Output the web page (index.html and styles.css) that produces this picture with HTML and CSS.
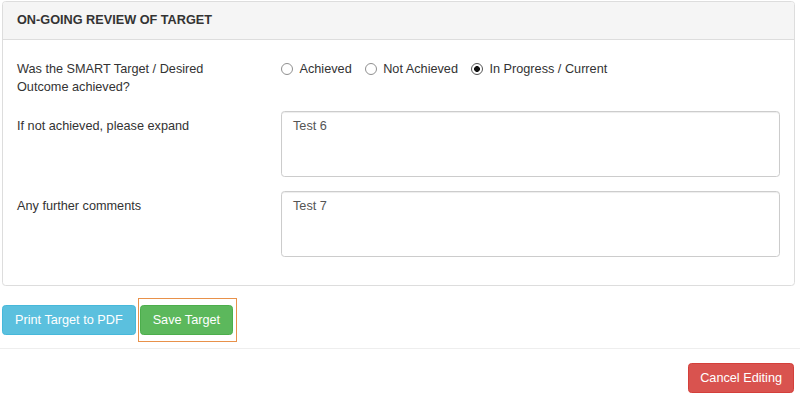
FILE: index.html
```html
<!DOCTYPE html>
<html lang="en">
<head>
<meta charset="utf-8">
<title>On-going review of target</title>
<link rel="stylesheet" href="styles.css">
</head>
<body>
<section class="panel">
  <div class="panel-heading">ON-GOING REVIEW OF TARGET</div>
  <div class="panel-body">
    <div class="form-row">
      <div class="label">Was the SMART Target / Desired Outcome achieved?</div>
      <div class="radios">
        <label class="radio"><input type="radio" name="outcome"><span>Achieved</span></label>
        <label class="radio"><input type="radio" name="outcome"><span>Not Achieved</span></label>
        <label class="radio"><input type="radio" name="outcome" checked><span>In Progress / Current</span></label>
      </div>
    </div>
    <div class="form-row">
      <div class="label">If not achieved, please expand</div>
      <textarea class="field">Test 6</textarea>
    </div>
    <div class="form-row">
      <div class="label">Any further comments</div>
      <textarea class="field">Test 7</textarea>
    </div>
  </div>
</section>
<div class="actions">
  <button class="btn btn-info">Print Target to PDF</button>
  <span class="highlight"><button class="btn btn-success">Save Target</button></span>
</div>
<hr class="divider">
<div class="footer">
  <button class="btn btn-danger">Cancel Editing</button>
</div>
</body>
</html>
```
FILE: styles.css
```css
* { box-sizing: border-box; }
html, body { margin: 0; padding: 0; background: #fff; }
body {
  font-family: "Liberation Sans", Arial, sans-serif;
  font-size: 12.7px;
  line-height: 18.5px;
  color: #333;
  width: 800px;
  height: 395px;
  overflow: hidden;
}
.panel {
  margin: 1px 5px 0 2px;
  border: 1px solid #ddd;
  border-radius: 3.6px;
  background: #fff;
}
.panel-heading {
  background: #f5f5f5;
  border-bottom: 1px solid #ddd;
  border-radius: 3px 3px 0 0;
  padding: 9px 14px;
  font-weight: bold;
}
.panel-body {
  padding: 14px;
}
.form-row {
  display: grid;
  grid-template-columns: 264px 1fr;
  margin-bottom: 14px;
}
.form-row:first-child .field { margin-top: -1px; }
.label {
  padding-top: 6px;
  padding-right: 45px;
}
.radios {
  display: flex;
  align-items: center;
  gap: 13px;
  padding-top: 6px;
  height: 24.5px;
}
.radio {
  display: flex;
  align-items: center;
}
.radio input {
  -webkit-appearance: none;
  appearance: none;
  width: 12px;
  height: 12px;
  margin: 0 6.5px 0 0;
  border: 1px solid #909090;
  border-radius: 50%;
  background: #fff;
}
.radio input:checked {
  border-color: #555;
  background: radial-gradient(circle, #111 0, #111 2.6px, #fff 3.2px);
}
.field {
  display: block;
  width: 100%;
  height: 66px;
  margin: 0;
  padding: 5.5px 11px;
  border: 1px solid #ccc;
  border-radius: 3.6px;
  box-shadow: inset 0 1px 1px rgba(0,0,0,.075);
  font: inherit;
  color: #555;
  resize: none;
  overflow: hidden;
}
.actions {
  display: flex;
  align-items: center;
  gap: 2px;
  margin: 12px 0 0 2px;
}
.btn {
  display: inline-block;
  margin: 0;
  padding: 5px 12px;
  border: 1px solid transparent;
  border-radius: 3.6px;
  font-family: inherit;
  font-size: 12.7px;
  line-height: 18px;
  color: #fff;
  cursor: pointer;
}
.btn-info { background: #5bc0de; border-color: #46b8da; }
.btn-success { background: #5cb85c; border-color: #4cae4c; }
.btn-danger { background: #d9534f; border-color: #d43f3a; padding: 5px 11px; }
.highlight {
  display: inline-block;
  border: 1px solid #e8914a;
  padding: 6px 3px 6px 1px;
}
.highlight .btn { display: block; }
.divider {
  margin: 6px 0 0 0;
  border: 0;
  border-top: 1px solid #eee;
  height: 0;
}
.footer {
  display: flex;
  justify-content: flex-end;
  padding: 14px 6px 0 0;
}
```
